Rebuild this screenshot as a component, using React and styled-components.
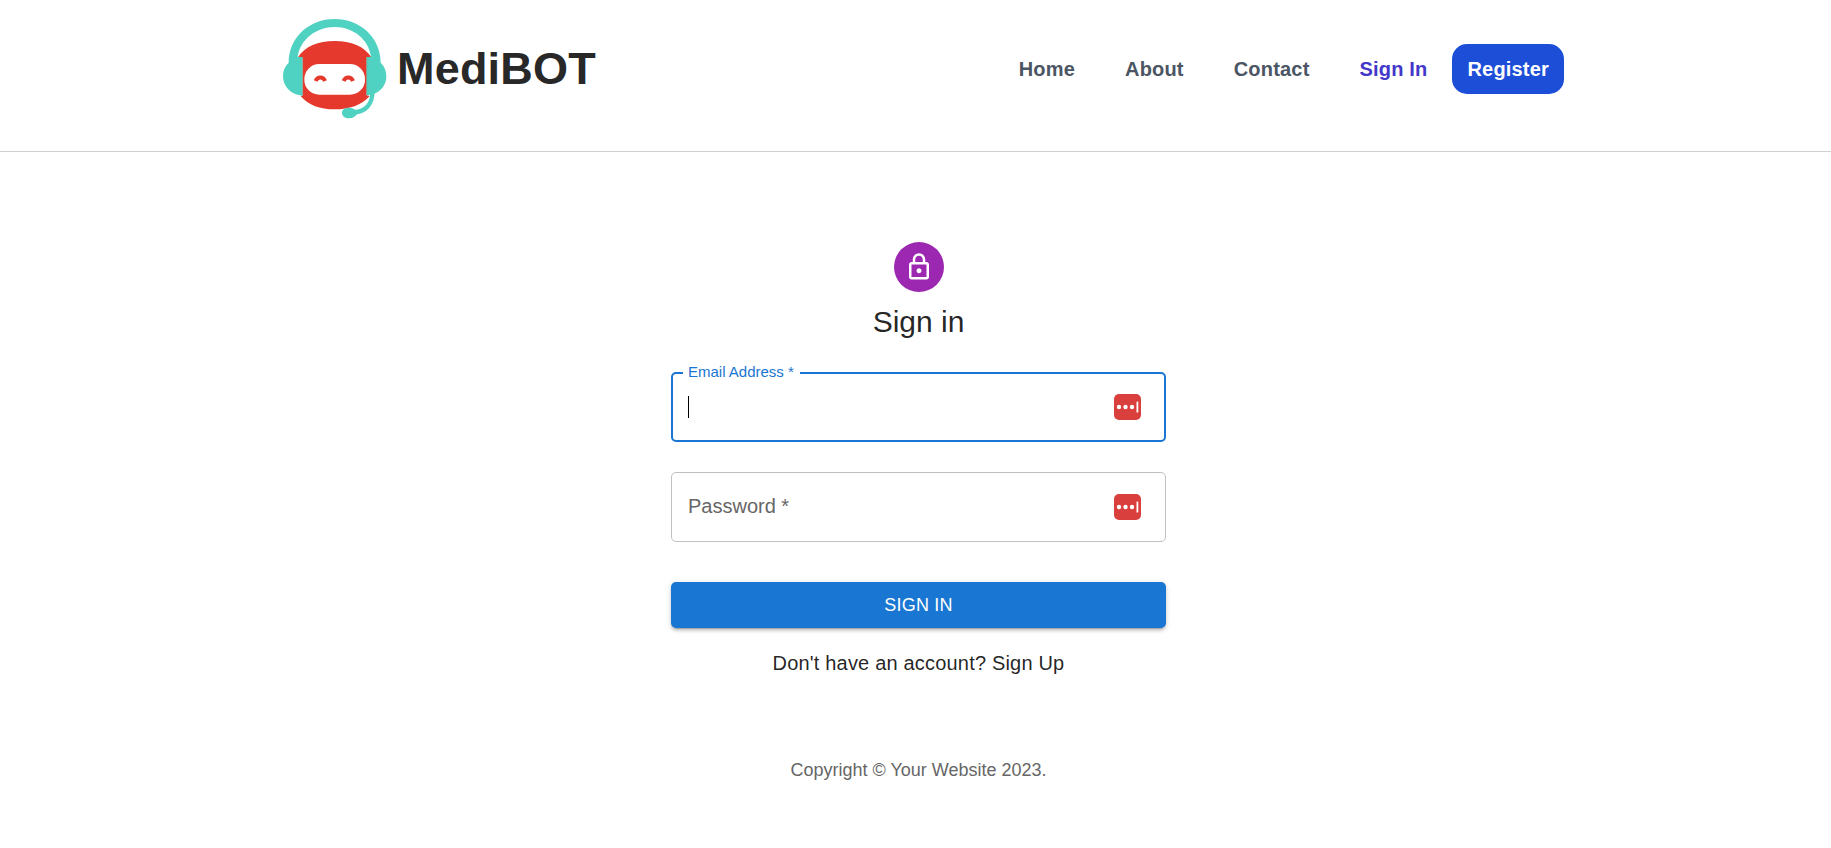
import React, { useState } from "react";
import styled, { createGlobalStyle } from "styled-components";

const GlobalStyle = createGlobalStyle`
  *, *::before, *::after { box-sizing: border-box; }
  body {
    margin: 0;
    background: #fff;
    color: rgba(0, 0, 0, 0.87);
    font-family: "Liberation Sans", Arial, sans-serif;
    font-size: 20px;
    line-height: 30px;
    letter-spacing: 0.00938em;
  }
  a { color: inherit; text-decoration: none; }
`;

const Header = styled.header`
  border-bottom: 1px solid #d1d1d1;
  padding: 10px 0 23px 6px;
`;

const HeaderInner = styled.div`
  display: flex;
  align-items: center;
  justify-content: space-between;
  max-width: 1291px;
  margin: 0 auto;
`;

const Brand = styled.a`
  display: flex;
  align-items: center;
  gap: 10px;
  color: #282828;
  font-size: 45px;
  font-weight: 700;
  line-height: 50px;
`;

const LogoMark = styled.svg`
  display: block;
  width: 114px;
  height: 118px;
`;

const Nav = styled.nav`
  display: flex;
  align-items: center;
  gap: 50px;
`;

const Account = styled.div`
  display: flex;
  align-items: center;
  gap: 25px;
`;

const NavLink = styled.a`
  && { color: ${({ $active }) => ($active ? "#4338ca" : "#4b5563")}; }
  font-weight: 700;
`;

const RegisterLink = styled.a`
  && { color: #fff; }
  padding: 10px 15px;
  border-radius: 15px;
  background: #1d4ed8;
  font-weight: 700;
`;

const Main = styled.main`
  display: flex;
  flex-direction: column;
  align-items: center;
  padding: 90px 0 60px 6px;
`;

const Avatar = styled.div`
  display: grid;
  place-items: center;
  width: 50px;
  height: 50px;
  border-radius: 50%;
  background: #9c27b0;
`;

const LockGlyph = styled.svg`
  width: 30px;
  height: 30px;
  fill: #fff;
`;

const Title = styled.h1`
  margin: 10px 0 30px;
  font-size: 30px;
  font-weight: 400;
  line-height: 40px;
  letter-spacing: 0;
`;

const Form = styled.form`
  display: flex;
  flex-direction: column;
  gap: 30px;
  width: 100%;
  max-width: 495px;
`;

const Field = styled.div`
  position: relative;
  display: flex;
  align-items: center;
  height: 70px;
  padding: ${({ $active }) => ($active ? "0 23px 0 15px" : "0 24px 0 16px")};
  border: ${({ $active }) => ($active ? "2px solid #1976d2" : "1px solid #c0c0c0")};
  border-radius: 5px;
`;

const FieldLabel = styled.label`
  position: absolute;
  left: ${({ $floating }) => ($floating ? "10px" : "16px")};
  top: ${({ $floating }) => ($floating ? "-12px" : "18px")};
  padding: ${({ $floating }) => ($floating ? "0 6px 0 5px" : "0")};
  background: #fff;
  color: ${({ $floating }) => ($floating ? "#1976d2" : "#666")};
  font-size: ${({ $floating }) => ($floating ? "15px" : "20px")};
  line-height: ${({ $floating }) => ($floating ? "20px" : "30px")};
  letter-spacing: 0;
  pointer-events: none;
`;

const TextInput = styled.input`
  flex: 1;
  min-width: 0;
  height: 30px;
  padding: 0;
  border: 0;
  outline: 0;
  background: transparent;
  color: inherit;
  font: inherit;
  letter-spacing: inherit;
  caret-color: ${({ $ownCaret }) => ($ownCaret ? "transparent" : "auto")};
`;

const Caret = styled.span`
  width: 1px;
  height: 22px;
  background: #000;
`;

const ManagerIcon = styled.svg`
  flex: none;
  width: 27px;
  height: 26px;
`;

const SubmitButton = styled.button`
  height: 46px;
  margin-top: 10px;
  border: 0;
  border-radius: 5px;
  background: #1976d2;
  color: #fff;
  font: inherit;
  font-size: 18px;
  letter-spacing: inherit;
  text-transform: uppercase;
  cursor: pointer;
  box-shadow: 0 4px 1px -3px rgba(0, 0, 0, 0.2), 0 3px 3px 0 rgba(0, 0, 0, 0.14),
    0 1px 6px 0 rgba(0, 0, 0, 0.12);
`;

const SignUpLink = styled.a`
  margin-top: 20px;
`;

const Copyright = styled.footer`
  margin-top: 80px;
  color: #666;
  font-size: 18px;
  line-height: 25px;
  letter-spacing: 0;
`;

function Logo() {
  return (
    <LogoMark viewBox="9 30 342 354" aria-hidden="true">
      <path
        fill="#e4392c"
        d="M84 172C104 139 145 123 194 123S284 139 304 172L291 176V286L299 288C275 316 238 328 194 328S115 316 92 288L98 286V176Z"
      />
      <path
        fill="#50d2c2"
        d="M56 188C56 112 118 57 194 57S332 112 332 188C343 198 349 212 349 229C349 259 325 286 289 286V171H303C297 119 250 81 194 81S90 119 83 171H98V287C63 286 39 259 39 229C39 212 45 198 56 188Z"
      />
      <path fill="none" stroke="#a99083" strokeWidth="2" d="M98 172V286M290 172V286" />
      <rect x="103" y="192" width="182" height="92" rx="45" fill="#fff" />
      <path
        fill="none"
        stroke="#e4392c"
        strokeWidth="12"
        d="M137 243C142 229 160 229 165 243M221 243C226 229 244 229 249 243"
      />
      <path fill="none" stroke="#50d2c2" strokeWidth="13" d="M307 275C308 311 288 335 252 337" />
      <path
        fill="#50d2c2"
        d="M216 338C216 328 225 323 237 323C247 323 254 328 262 332V342C255 350 248 355 237 355C225 355 216 348 216 338Z"
      />
    </LogoMark>
  );
}

function PasswordManagerIcon() {
  return (
    <ManagerIcon viewBox="0 0 27 26" aria-hidden="true">
      <rect width="27" height="26" rx="5" fill="#d93f3c" />
      <g fill="#fff">
        <circle cx="5" cy="13" r="2.200" />
        <circle cx="11.500" cy="13" r="2.200" />
        <circle cx="18" cy="13" r="2.200" />
        <rect x="22.500" y="7.500" width="1.800" height="11" rx="0.600" />
      </g>
    </ManagerIcon>
  );
}

function TextField({ id, label, type, active }) {
  const [value, setValue] = useState("");
  return (
    <Field $active={active}>
      <FieldLabel htmlFor={id} $floating={active || value !== ""}>
        {label} *
      </FieldLabel>
      {active && value === "" && <Caret />}
      <TextInput
        id={id}
        type={type}
        required
        $ownCaret={active && value === ""}
        value={value}
        onChange={(event) => setValue(event.target.value)}
      />
      <PasswordManagerIcon />
    </Field>
  );
}

export default function App() {
  return (
    <>
      <GlobalStyle />
      <Header>
        <HeaderInner>
          <Brand href="#home">
            <Logo />
            MediBOT
          </Brand>
          <Nav>
            <NavLink href="#home">Home</NavLink>
            <NavLink href="#about">About</NavLink>
            <NavLink href="#contact">Contact</NavLink>
            <Account>
              <NavLink href="#sign-in" $active>
                Sign In
              </NavLink>
              <RegisterLink href="#register">Register</RegisterLink>
            </Account>
          </Nav>
        </HeaderInner>
      </Header>
      <Main>
        <Avatar>
          <LockGlyph viewBox="0 0 24 24" aria-hidden="true">
            <path d="M18 8h-1V6c0-2.760-2.240-5-5-5S7 3.240 7 6v2H6c-1.100 0-2 .9-2 2v10c0 1.100.9 2 2 2h12c1.100 0 2-.9 2-2V10c0-1.100-.9-2-2-2zM9 6c0-1.660 1.340-3 3-3s3 1.340 3 3v2H9V6zm9 14H6V10h12v10zm-6-3c1.100 0 2-.9 2-2s-.9-2-2-2-2 .9-2 2 .9 2 2 2z" />
          </LockGlyph>
        </Avatar>
        <Title>Sign in</Title>
        <Form onSubmit={(event) => event.preventDefault()}>
          <TextField id="email" label="Email Address" type="email" active />
          <TextField id="password" label="Password" type="password" />
          <SubmitButton type="submit">Sign In</SubmitButton>
        </Form>
        <SignUpLink href="#sign-up">Don't have an account? Sign Up</SignUpLink>
        <Copyright>Copyright © Your Website 2023.</Copyright>
      </Main>
    </>
  );
}
